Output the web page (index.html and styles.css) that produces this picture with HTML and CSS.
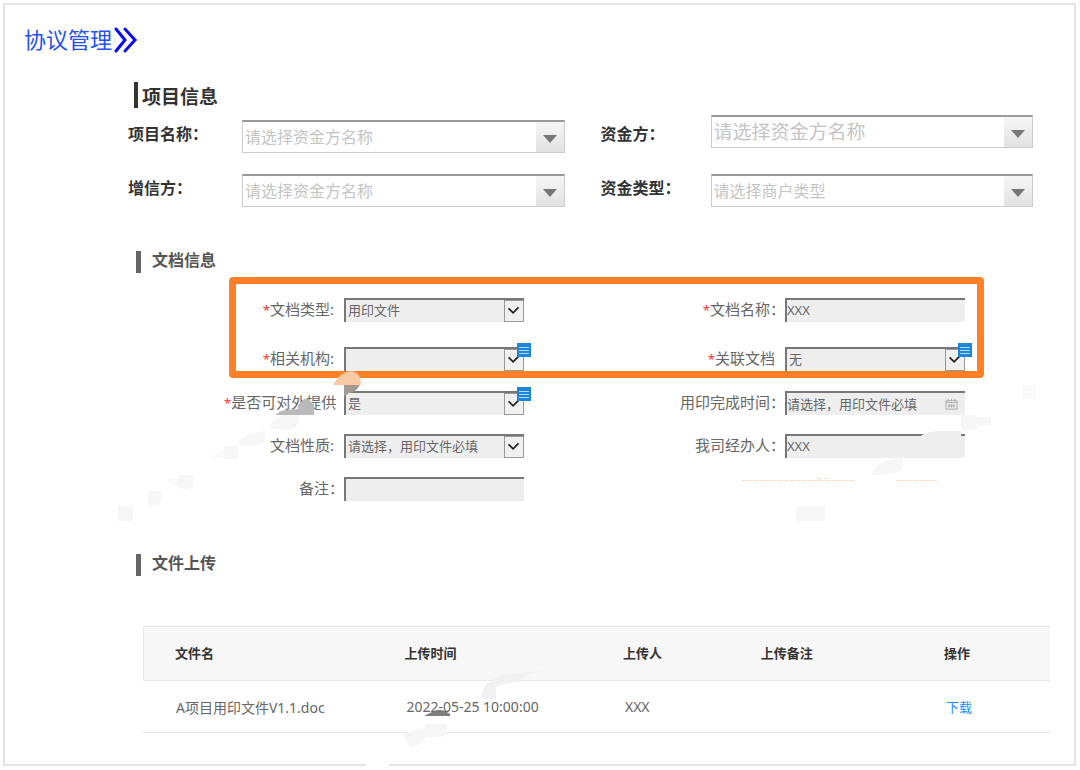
FILE: index.html
```html
<!DOCTYPE html>
<html lang="zh-CN">
<head>
    <meta charset="UTF-8">
    <meta name="viewport" content="width=device-width, initial-scale=1.0">
    <title>协议管理</title>
    <link rel="stylesheet" href="styles.css">
</head>
<body>
    <main class="page">
        <header class="page-header">
            <h1>协议管理</h1>
            <svg class="chevrons" viewBox="0 0 24 26" aria-hidden="true">
                <path d="M2 2 L11 13 L2 24 M11 2 L21 13 L11 24"/>
            </svg>
        </header>

        <section class="project">
            <h2 class="project-title">项目信息</h2>
            <div class="project-grid">
                <label for="projectName">项目名称：</label>
                <div class="combo combo-low">
                    <select id="projectName"><option>请选择资金方名称</option></select>
                </div>
                <label for="funder">资金方：</label>
                <div class="combo combo-large">
                    <select id="funder"><option>请选择资金方名称</option></select>
                </div>
                <label for="enhancer">增信方：</label>
                <div class="combo">
                    <select id="enhancer"><option>请选择资金方名称</option></select>
                </div>
                <label for="fundType">资金类型：</label>
                <div class="combo">
                    <select id="fundType"><option>请选择商户类型</option></select>
                </div>
            </div>
        </section>

        <section class="document">
            <h2 class="section-title">文档信息</h2>
            <div class="doc-grid highlight">
                <label for="docType"><i>*</i>文档类型:</label>
                <div class="field drop">
                    <select id="docType"><option>用印文件</option></select>
                    <svg class="arrow" viewBox="0 0 20 22" aria-hidden="true"><path d="M4 8 L9 13 L15 7"/></svg>
                </div>
                <label for="docName"><i>*</i>文档名称：</label>
                <div class="field"><input id="docName" type="text" value="XXX"></div>

                <label for="org"><i>*</i>相关机构:</label>
                <div class="field drop">
                    <select id="org"><option></option></select>
                    <svg class="arrow" viewBox="0 0 20 22" aria-hidden="true"><path d="M4 8 L9 13 L15 7"/></svg>
                    <svg class="badge" viewBox="0 0 14 14" aria-hidden="true"><path d="M2 4.5H12M2 7.5H12M2 10.5H12"/></svg>
                </div>
                <label for="related" class="no-colon"><i>*</i>关联文档</label>
                <div class="field drop">
                    <select id="related"><option>无</option></select>
                    <svg class="arrow" viewBox="0 0 20 22" aria-hidden="true"><path d="M4 8 L9 13 L15 7"/></svg>
                    <svg class="badge" viewBox="0 0 14 14" aria-hidden="true"><path d="M2 4.5H12M2 7.5H12M2 10.5H12"/></svg>
                </div>
            </div>

            <div class="doc-grid rest">
                <label for="external" class="no-colon"><i>*</i>是否可对外提供</label>
                <div class="field drop">
                    <select id="external"><option>是</option></select>
                    <svg class="arrow" viewBox="0 0 20 22" aria-hidden="true"><path d="M4 8 L9 13 L15 7"/></svg>
                    <svg class="badge" viewBox="0 0 14 14" aria-hidden="true"><path d="M2 4.5H12M2 7.5H12M2 10.5H12"/></svg>
                </div>
                <label for="sealTime" class="wide-colon">用印完成时间：</label>
                <div class="field">
                    <input id="sealTime" type="text" value="请选择，用印文件必填">
                    <svg class="calendar" viewBox="0 0 14 12" aria-hidden="true">
                        <path d="M1 2.5H13V11.5H1Z M1 4.5H13 M3.5 0.5V3 M7 0.5V3 M10.5 0.5V3 M4.5 6V10 M7 6V10 M9.5 6V10 M3 8H11"/>
                    </svg>
                </div>

                <label for="nature">文档性质:</label>
                <div class="field drop">
                    <select id="nature"><option>请选择，用印文件必填</option></select>
                    <svg class="arrow" viewBox="0 0 20 22" aria-hidden="true"><path d="M4 8 L9 13 L15 7"/></svg>
                </div>
                <label for="handler" class="wide-colon">我司经办人：</label>
                <div class="field"><input id="handler" type="text" value="XXX"></div>

                <label for="remark" class="wide-colon">备注：</label>
                <div class="field"><input id="remark" type="text"></div>
            </div>
        </section>

        <section class="upload">
            <h2 class="section-title">文件上传</h2>
            <table class="files">
                <thead>
                    <tr>
                        <th class="col-name">文件名</th>
                        <th class="col-time">上传时间</th>
                        <th class="col-user">上传人</th>
                        <th class="col-note">上传备注</th>
                        <th>操作</th>
                    </tr>
                </thead>
                <tbody>
                    <tr>
                        <td>A项目用印文件V1.1.doc</td>
                        <td>2022-05-25 10:00:00</td>
                        <td>XXX</td>
                        <td></td>
                        <td><a href="#">下载</a></td>
                    </tr>
                </tbody>
            </table>
        </section>
    </main>

    <!-- faded watermark pieces over the page -->
    <svg class="watermark" viewBox="0 0 1080 770" aria-hidden="true">
        <g class="mark-light">
            <path d="M118 506h15v15h-15zM148 491h14q1 8 -4 14h-10zM178 475h15v12q-8 4 -15 0z"/>
            <path d="M224 446h14v13h-14zM238 442q8 -9 27 -11v10q-8 7 -26 4zM269 428q4 -10 15 -13h15v7q-4 9 -13 8z"/>
            <path d="M872 473q6 -13 30 -16v10q-4 9 -30 8zM961 415h16v15h-16zM977 417h14v8h-14zM796 506h29v15h-29z"/>
            <path d="M403 735q8 -6 24 -6v8q-8 10 -18 10z"/>
            <path d="M425 724h22q2 10 -6 13h-16z"/>
        </g>
        <path class="mark-faint" d="M1023 385h13v14h-13zM166 478h12v8q-8 0 -12 -8zM210 458q6 -6 14 -8v8z"/>
        <path class="mark-field" d="M918 438q6 -6 20 -7h23v20h-43z"/>
        <path class="mark-mid" d="M482 699q-2 -16 20 -24q8 -3 42 -4q-16 2 -28 11q-14 2 -20 5v12z"/>
        <path class="mark-gray" d="M276 415q4 -6 22 -6v-4l6 -6h5l5 7v9z"/>
        <path class="mark-dark" d="M424 716l10 -5q6 -2 11 0l5 3v2z"/>
        <path class="mark-peach" d="M333 385q8 -14 19 -14q9 2 9 14z"/>
        <path class="mark-taupe" d="M344 385h16q-5 8 -11 8l-5 4z"/>
        <path class="mark-line" d="M742 480.500H788M790 480.500H854M896 480.500H938M817 478.500h4M824 478.500h4"/>
        <path class="mark-gap" d="M366 762h23v6h-23z"/>
    </svg>
</body>
</html>
```
FILE: styles.css
```css
* {
    box-sizing: border-box;
}
body {
    margin: 3px;
    background: #fff;
    font-family: "Noto Sans", "Noto Sans CJK SC", sans-serif;
    color: #666;
}
h1, h2 {
    margin: 0;
}
select, input {
    display: block;
    width: 100%;
    height: 100%;
    margin: 0;
    border: none;
    border-radius: 0;
    outline: none;
    background: transparent;
    font-family: inherit;
    color: inherit;
    appearance: none;
}
.page {
    margin-right: 1px;
    padding: 22px 24px 31px 19px;
    border: 2px solid #e4e4e4;
}
.page-header {
    display: flex;
    align-items: center;
    height: 26px;
}
.page-header h1 {
    padding-bottom: 2px;
    font-size: 22px;
    font-weight: 400;
    line-height: 26px;
    color: #2451f0;
}
.chevrons {
    width: 24px;
    height: 26px;
    margin-left: 2px;
    fill: none;
    stroke: #0a0af5;
    stroke-width: 3;
    stroke-linecap: round;
}

/* project info */
.project {
    margin: 29px 17px 0 104px;
}
.project-title {
    height: 26px;
    margin-left: 6px;
    padding-left: 4px;
    border-left: 4px solid #333;
    font-size: 19px;
    line-height: 30px;
    color: #333;
}
.project-grid {
    display: grid;
    grid-template-columns: 114px 1fr 146px 1fr;
    grid-template-rows: 38px 33px;
    row-gap: 21px;
    margin-top: 7px;
}
.project-grid label {
    align-self: end;
    padding-bottom: 7px;
    font-size: 16px;
    font-weight: 700;
    line-height: 24px;
    color: #333;
}
.project-grid label:nth-of-type(even) {
    padding-left: 36px;
}
.combo {
    position: relative;
    height: 33px;
    border: 1px solid #ccc;
    border-top: 2px solid #999;
    font-size: 16px;
    color: #c4c4c4;
}
.combo select {
    padding: 0 32px 0 2px;
    font-size: inherit;
}
.combo-low {
    align-self: end;
}
.combo-large {
    font-size: 19px;
}
.combo::before {
    content: "";
    position: absolute;
    top: 0;
    right: 0;
    bottom: 0;
    width: 28px;
    background: linear-gradient(#f6f6f6, #e2e2e2);
    pointer-events: none;
}
.combo::after {
    content: "";
    position: absolute;
    top: 13px;
    right: 7px;
    border: 7px solid transparent;
    border-top: 8px solid #777;
    border-bottom: 0;
    pointer-events: none;
}

/* document info */
.document {
    margin: 44px 66px 0 112px;
}
.section-title {
    height: 22px;
    padding-left: 11px;
    border-left: 5px solid #666;
    font-size: 16px;
    line-height: 18px;
    color: #555;
}
.doc-grid {
    display: grid;
    grid-template-columns: 108px 1fr 261px 1fr;
    grid-auto-rows: 24px;
}
.highlight {
    row-gap: 25px;
    margin: 4px 0 0 93px;
    padding: 14px 12px 0 0;
    border: 7px solid #ff7f27;
    border-radius: 4px;
}
.rest {
    grid-template-columns: 120px 1fr 261px 1fr;
    row-gap: 19px;
    margin: 13px 19px 0 88px;
}
.doc-grid label {
    padding-right: 10px;
    font-size: 15px;
    line-height: 22px;
    text-align: right;
    white-space: nowrap;
}
.doc-grid label:nth-of-type(even),
.doc-grid label.wide-colon {
    padding-right: 0;
}
.doc-grid label.no-colon {
    padding-right: 10px;
}
.doc-grid i {
    font-size: 13px;
    font-style: normal;
    color: #f33;
}
.field {
    position: relative;
    border-top: 2px solid #777;
    border-left: 2px solid #777;
    background: #eee;
    font-size: 13px;
}
.field select {
    padding: 0 22px 2px 2px;
    font-size: 13px;
}
.field input {
    padding: 0 0 2px;
    font-size: 13px;
}
.arrow {
    position: absolute;
    top: 0;
    right: 0;
    width: 20px;
    height: 22px;
    border: 1px solid #999;
    background: #f0f0f0;
    fill: none;
    stroke: #222;
    stroke-width: 2;
    pointer-events: none;
}
.badge {
    position: absolute;
    top: -6px;
    right: -7px;
    width: 14px;
    height: 14px;
    background: #1c86dc;
    stroke: #b4dcfa;
    stroke-width: 1;
}
.calendar {
    position: absolute;
    top: 5px;
    right: 7px;
    width: 13px;
    height: 12px;
    fill: none;
    stroke: #aaa;
    stroke-width: 1;
}

/* file upload */
.upload {
    margin: 53px 0 0 112px;
}
.files {
    width: calc(100% - 7px);
    margin: 50px 0 0 7px;
    border-collapse: separate;
    border-spacing: 0;
    table-layout: fixed;
    font-size: 14px;
}
.files th {
    height: 55px;
    padding: 0 0 3px 31px;
    border-top: 1px solid #e8e8e8;
    border-bottom: 1px solid #e8e8e8;
    background: #f7f7f7;
    font-size: 13px;
    text-align: left;
    color: #333;
}
.files th:first-child {
    border-left: 1px solid #e8e8e8;
}
.files td {
    height: 52px;
    padding: 0 0 0 33px;
    border-bottom: 1px solid #e4e4e4;
    white-space: nowrap;
}
.files a {
    font-size: 13px;
    color: #1e8cff;
    text-decoration: none;
}
.col-name {
    width: 25.4%;
}
.col-time {
    width: 24.1%;
}
.col-user {
    width: 15.2%;
}
.col-note {
    width: 20.2%;
}

/* watermark */
.watermark {
    position: absolute;
    top: 0;
    left: 0;
    width: 100%;
    pointer-events: none;
}
.mark-light {
    fill: #f6f6f6;
}
.mark-faint {
    fill: #fafafa;
}
.mark-field {
    fill: #eee;
}
.mark-mid {
    fill: #f1f1f1;
}
.mark-gray {
    fill: #b9b9b9;
}
.mark-dark {
    fill: #7c7c7c;
}
.mark-peach {
    fill: #fbc9a4;
}
.mark-taupe {
    fill: #a39a94;
}
.mark-line {
    fill: none;
    stroke: #fbdccb;
    stroke-dasharray: 5 1;
}
.mark-gap {
    fill: #fff;
}
```
